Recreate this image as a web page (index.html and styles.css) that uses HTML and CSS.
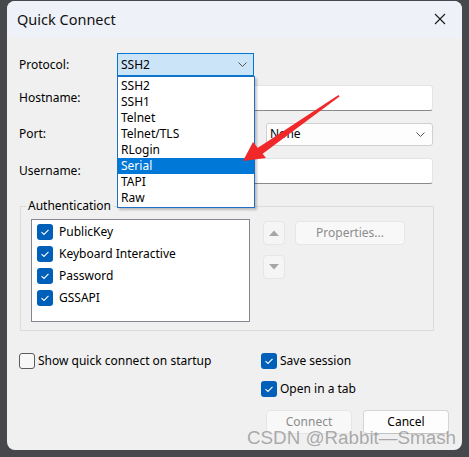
FILE: index.html
```html
<!DOCTYPE html>
<html>
<head>
<meta charset="utf-8">
<link rel="stylesheet" href="styles.css">
</head>
<body>
<div class="screen">
  <div class="dialog">
    <div class="titlebar">
      <span class="title">Quick Connect</span>
      <svg class="close" width="12" height="12" viewBox="0 0 12 12"><path d="M1 1 L11 11 M11 1 L1 11" stroke="#1a1a1a" stroke-width="1.1" fill="none"/></svg>
    </div>
    <div class="body">
      <div class="form">
        <div class="row r1">
          <span class="lbl">Protocol:</span>
          <div class="combo-wrap">
            <div class="combo active">
              <span>SSH2</span>
              <svg class="chev" width="9" height="5" viewBox="0 0 9 5"><path d="M0.5 0.5 L4.5 4.5 L8.5 0.5" stroke="#555" stroke-width="1" fill="none"/></svg>
            </div>
            <ul class="droplist">
              <li>SSH2</li>
              <li>SSH1</li>
              <li>Telnet</li>
              <li>Telnet/TLS</li>
              <li>RLogin</li>
              <li class="sel">Serial</li>
              <li>TAPI</li>
              <li>Raw</li>
            </ul>
          </div>
        </div>
        <div class="row r2">
          <span class="lbl">Hostname:</span>
          <div class="input full"></div>
        </div>
        <div class="row r3">
          <span class="lbl">Port:</span>
          <div class="field-port">
            <div class="input port"></div>
            <span class="fw"></span>
            <div class="combo plain">
              <span>None</span>
              <svg class="chev" width="9" height="5" viewBox="0 0 9 5"><path d="M0.5 0.5 L4.5 4.5 L8.5 0.5" stroke="#555" stroke-width="1" fill="none"/></svg>
            </div>
          </div>
        </div>
        <div class="row r4">
          <span class="lbl">Username:</span>
          <div class="input full"></div>
        </div>
      </div>

      <fieldset class="group">
        <legend>Authentication</legend>
        <div class="group-inner">
          <div class="listbox">
            <div class="item"><span class="cb on"><svg width="16" height="16" viewBox="0 0 16 16"><path d="M4.5 8.2 L7 10.5 L11.5 5.8" stroke="#fff" stroke-width="1.1" fill="none"/></svg></span>PublicKey</div>
            <div class="item"><span class="cb on"><svg width="16" height="16" viewBox="0 0 16 16"><path d="M4.5 8.2 L7 10.5 L11.5 5.8" stroke="#fff" stroke-width="1.1" fill="none"/></svg></span>Keyboard Interactive</div>
            <div class="item"><span class="cb on"><svg width="16" height="16" viewBox="0 0 16 16"><path d="M4.5 8.2 L7 10.5 L11.5 5.8" stroke="#fff" stroke-width="1.1" fill="none"/></svg></span>Password</div>
            <div class="item"><span class="cb on"><svg width="16" height="16" viewBox="0 0 16 16"><path d="M4.5 8.2 L7 10.5 L11.5 5.8" stroke="#fff" stroke-width="1.1" fill="none"/></svg></span>GSSAPI</div>
          </div>
          <div class="arrows">
            <div class="abtn"><svg width="10" height="6" viewBox="0 0 10 6"><path d="M0 6 L5 0.5 L10 6 Z" fill="#a6a6a6"/></svg></div>
            <div class="abtn"><svg width="10" height="6" viewBox="0 0 10 6"><path d="M0 0 L5 5.5 L10 0 Z" fill="#a6a6a6"/></svg></div>
          </div>
          <div class="btn props disabled">Properties...</div>
        </div>
      </fieldset>

      <div class="options">
        <div class="opt-col left">
          <div class="opt"><span class="cb off"></span>Show quick connect on startup</div>
        </div>
        <div class="opt-col right">
          <div class="opt"><span class="cb on"><svg width="16" height="16" viewBox="0 0 16 16"><path d="M4.5 8.2 L7 10.5 L11.5 5.8" stroke="#fff" stroke-width="1.1" fill="none"/></svg></span>Save session</div>
          <div class="opt"><span class="cb on"><svg width="16" height="16" viewBox="0 0 16 16"><path d="M4.5 8.2 L7 10.5 L11.5 5.8" stroke="#fff" stroke-width="1.1" fill="none"/></svg></span>Open in a tab</div>
        </div>
      </div>

      <div class="buttons">
        <div class="btn disabled wide">Connect</div>
        <div class="btn wide cancel">Cancel</div>
      </div>
    </div>
  </div>

  <svg class="redarrow" width="469" height="457" viewBox="0 0 469 457">
    <path d="M338.5 95 L339.5 96.5 L261 155 L256 149 Z" fill="#f0282a"/>
    <path d="M243 161 L253 142 L266 158 Z" fill="#f0282a"/>
  </svg>
  <div class="watermark">CSDN @Rabbit—Smash</div>
</div>
</body>
</html>
```

FILE: styles.css
```css
* { box-sizing: border-box; }
html, body { margin: 0; padding: 0; }
body {
  background: #46484c;
  font-family: "Noto Sans", "Open Sans", sans-serif;
  font-size: 12px;
  color: #000;
}
.screen {
  position: relative;
  width: 469px;
  height: 457px;
  overflow: hidden;
  padding: 1px 0 0 7px;
}
.dialog {
  width: 455px;
  height: 449px;
  border-radius: 8px;
  overflow: hidden;
  background: #f0f0f0;
  display: flex;
  flex-direction: column;
}
.titlebar {
  height: 37px;
  flex: none;
  background: #eef2f8;
  display: flex;
  align-items: center;
  justify-content: space-between;
  padding: 0 16px 0 10px;
}
.title {
  font-size: 14.5px;
  color: #111;
  margin-top: -1px;
}
.close { margin-top: -2px; }

.body {
  flex: 1;
  padding: 15px 0 0 12px;
  display: flex;
  flex-direction: column;
}
.form {
  display: flex;
  flex-direction: column;
}
.row {
  display: flex;
  align-items: center;
}
.lbl {
  width: 98px;
  flex: none;
  line-height: 16px;
}
.r1 { height: 23px; }
.r2 { height: 26px; margin-top: 9px; }
.r3 { height: 26px; margin-top: 10px; }
.r4 { height: 26px; margin-top: 11px; }

.combo-wrap {
  position: relative;
  width: 137px;
  height: 23px;
}
.combo {
  height: 23px;
  display: flex;
  align-items: center;
  justify-content: space-between;
  padding: 0 6px 0 3px;
  line-height: 16px;
}
.combo.active {
  background: #cce4f7;
  border: 1px solid #0078d4;
}
.combo.plain {
  width: 167px;
  background: #fdfdfd;
  border: 1px solid #d0d0d0;
  border-radius: 3px;
  padding-left: 3px;
  padding-right: 7px;
}
.droplist {
  position: absolute;
  left: 0;
  top: 23px;
  width: 138px;
  margin: 0;
  padding: 1px 0;
  list-style: none;
  background: #fff;
  border: 1px solid #1f6fc5;
  box-shadow: 2px 2px 2px rgba(0,0,0,0.22);
  z-index: 5;
}
.droplist li {
  height: 16px;
  line-height: 16px;
  padding-left: 3px;
}
.droplist li.sel {
  background: #0078d7;
  color: #fff;
}
.input {
  height: 26px;
  background: #fff;
  border: 1px solid #e4e4e4;
  border-bottom-color: #8a8a8a;
  border-radius: 3px;
  line-height: 24px;
  padding-left: 4px;
}
.input.full { width: 316px; }
.field-port {
  display: flex;
  align-items: center;
}
.input.port { width: 60px; }
.fw { width: 89px; flex: none; }

.group {
  margin: 14px 0 0 1px;
  width: 414px;
  border: 1px solid #dcdcdc;
  padding: 5px 10px 8px 10px;
  min-inline-size: 0;
}
.group legend {
  margin-left: -5px;
  padding: 0 2px;
  line-height: 16px;
}
.group-inner {
  display: flex;
  align-items: flex-start;
}
.listbox {
  width: 219px;
  height: 103px;
  background: #fff;
  border: 1px solid #828790;
  padding: 4px 0 0 5px;
  display: flex;
  flex-direction: column;
  gap: 6px;
}
.item {
  display: flex;
  align-items: center;
  height: 16px;
  line-height: 16px;
}
.cb {
  width: 16px;
  height: 16px;
  flex: none;
  border-radius: 3px;
  margin-right: 6px;
  display: inline-flex;
}
.cb.on { background: #005fb8; }
.cb.off { border: 1px solid #5c5c5c; background: #f7f7f7; }

.arrows {
  margin: 2px 0 0 13px;
  display: flex;
  flex-direction: column;
  gap: 10px;
}
.abtn {
  width: 22px;
  height: 24px;
  background: #f5f5f5;
  border: 1px solid #e6e6e6;
  border-radius: 4px;
  display: flex;
  align-items: center;
  justify-content: center;
}
.btn {
  height: 24px;
  border-radius: 4px;
  display: flex;
  align-items: center;
  justify-content: center;
  line-height: 16px;
}
.btn.disabled {
  background: #f8f8f8;
  border: 1px solid #e6e6e6;
  color: #8c8c8c;
}
.props {
  margin: 2px 0 0 10px;
  width: 110px;
}

.options {
  margin-top: 22px;
  display: flex;
}
.opt-col {
  display: flex;
  flex-direction: column;
  gap: 12px;
}
.opt-col.left { width: 242px; }
.opt {
  display: flex;
  align-items: center;
  height: 16px;
  line-height: 16px;
}
.opt .cb { margin-right: 3px; }

.buttons {
  margin-top: 13px;
  display: flex;
  justify-content: flex-end;
  gap: 11px;
  padding-right: 13px;
}
.btn.wide { width: 86px; }
.btn.cancel {
  background: #fdfdfd;
  border: 1px solid #d5d5d5;
  border-bottom-color: #c2c2c2;
}

.redarrow {
  position: absolute;
  left: 0;
  top: 0;
  z-index: 10;
  pointer-events: none;
}
.watermark {
  position: absolute;
  left: 247px;
  top: 427px;
  font-family: "Liberation Sans", Arial, sans-serif;
  font-size: 18.8px;
  color: rgba(120,120,120,0.6);
  white-space: nowrap;
  z-index: 11;
}
```
